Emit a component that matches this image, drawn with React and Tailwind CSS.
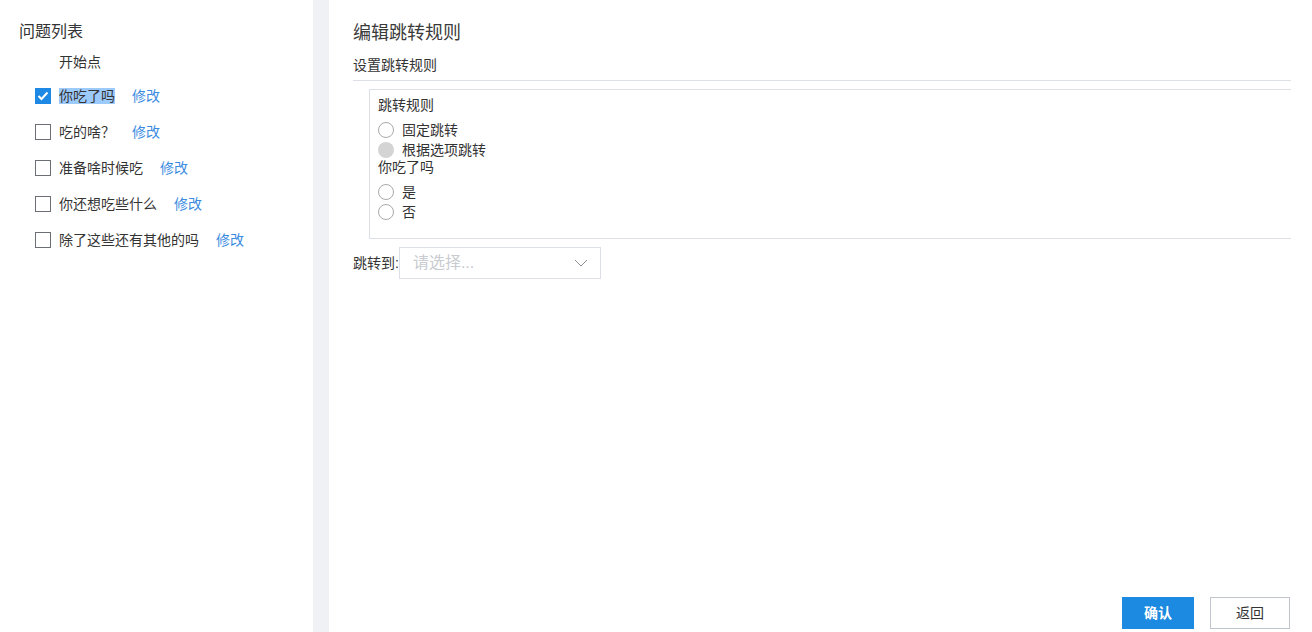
const questions = [
    {title: '你吃了吗', checked: true},
    {title: '吃的啥？'},
    {title: '准备啥时候吃'},
    {title: '你还想吃些什么'},
    {title: '除了这些还有其他的吗'},
];

function Radio({filled, label}) {
    return (
        <div className="flex items-center h-[20px]">
            {
                filled ?
                    <span className="w-[16px] h-[16px] rounded-full bg-[#d4d4d4]"/> :
                    <span className="w-[16px] h-[16px] rounded-full border border-[#a9a9a9] bg-white"/>
            }
            <span className="ml-[8px] text-[14px] leading-[20px] text-[#333]">{label}</span>
        </div>
    )
}

function Checkbox({checked}) {
    return checked ?
        <span className="flex items-center justify-center w-[16px] h-[16px] bg-[#1e88e5]">
            <svg width="12" height="10" viewBox="0 0 12 10">
                <polyline points="1.5,5 4.5,8 10.5,1.5" fill="none" stroke="#fff" strokeWidth="2"/>
            </svg>
        </span> :
        <span className="w-[16px] h-[16px] border border-[#6b6f75] bg-white"/>
}

export default function App() {
    return (
        <div className="flex h-[632px] w-full overflow-hidden bg-white text-[#333]"
             style={{fontFamily: '"Liberation Sans", "Noto Sans CJK SC", sans-serif'}}>

            {/* Question list */}
            <div className="w-[313px] shrink-0 pl-[19px] pt-[22px]">
                <div className="text-[16px] leading-[20px]">问题列表</div>
                <div className="mt-[10px] pl-[40px] text-[14px] leading-[20px]">开始点</div>
                <div className="mt-[6px]">
                    {
                        questions.map((q, i) =>
                            <div key={i} className="flex items-center h-[36px] pl-[16px]">
                                <Checkbox checked={q.checked}/>
                                <span className={`ml-[8px] text-[14px] leading-[16px] ${q.checked ? 'bg-[#9dcafc]' : ''}`}>{q.title}</span>
                                <span className="ml-[17px] text-[14px] leading-[16px] text-[#3b8cdf] cursor-pointer">修改</span>
                            </div>)
                    }
                </div>
            </div>

            <div className="w-[16px] shrink-0 bg-[#f0f1f5]"/>

            {/* Edit panel */}
            <div className="flex-1 flex flex-col pl-[24px] pr-[21px] pt-[22px] pb-[3px]">
                <div className="text-[18px] leading-[22px] text-[#3a3a3a]">编辑跳转规则</div>
                <div className="mt-[11px] text-[14px] leading-[20px]">设置跳转规则</div>
                <div className="mt-[5px] h-px bg-[#dcdfe6]"/>

                <div className="ml-[16px] mt-[8px] border-t border-b border-l border-[#dcdfe6] pl-[8px] pt-[5px] pb-[16px]">
                    <div className="text-[14px] leading-[20px]">跳转规则</div>
                    <div className="mt-[5px]">
                        <Radio label="固定跳转"/>
                        <Radio filled label="根据选项跳转"/>
                    </div>
                    <div className="text-[14px] leading-[14px]">你吃了吗</div>
                    <div className="mt-[8px]">
                        <Radio label="是"/>
                        <Radio label="否"/>
                    </div>
                </div>

                <div className="flex items-center mt-[8px]">
                    <span className="text-[14px] leading-[20px]">跳转到:</span>
                    <div className="flex items-center justify-between w-[202px] h-[32px] border border-[#dcdfe6] pl-[13px] pr-[12px]">
                        <span className="text-[16px] leading-[20px] text-[#c8cbd0]">请选择...</span>
                        <svg width="14" height="8" viewBox="0 0 14 8">
                            <polyline points="1,1 7,7 13,1" fill="none" stroke="#8a8e94" strokeWidth="1"/>
                        </svg>
                    </div>
                </div>

                <div className="flex-1"/>

                <div className="flex justify-end gap-[16px] mr-[1px]">
                    <button className="w-[72px] h-[32px] bg-[#1c8ae0] text-white text-[14px] font-bold">确认</button>
                    <button className="w-[80px] h-[32px] border border-[#c0c4cc] bg-white text-[14px] text-[#333]">返回</button>
                </div>
            </div>
        </div>
    )
}
